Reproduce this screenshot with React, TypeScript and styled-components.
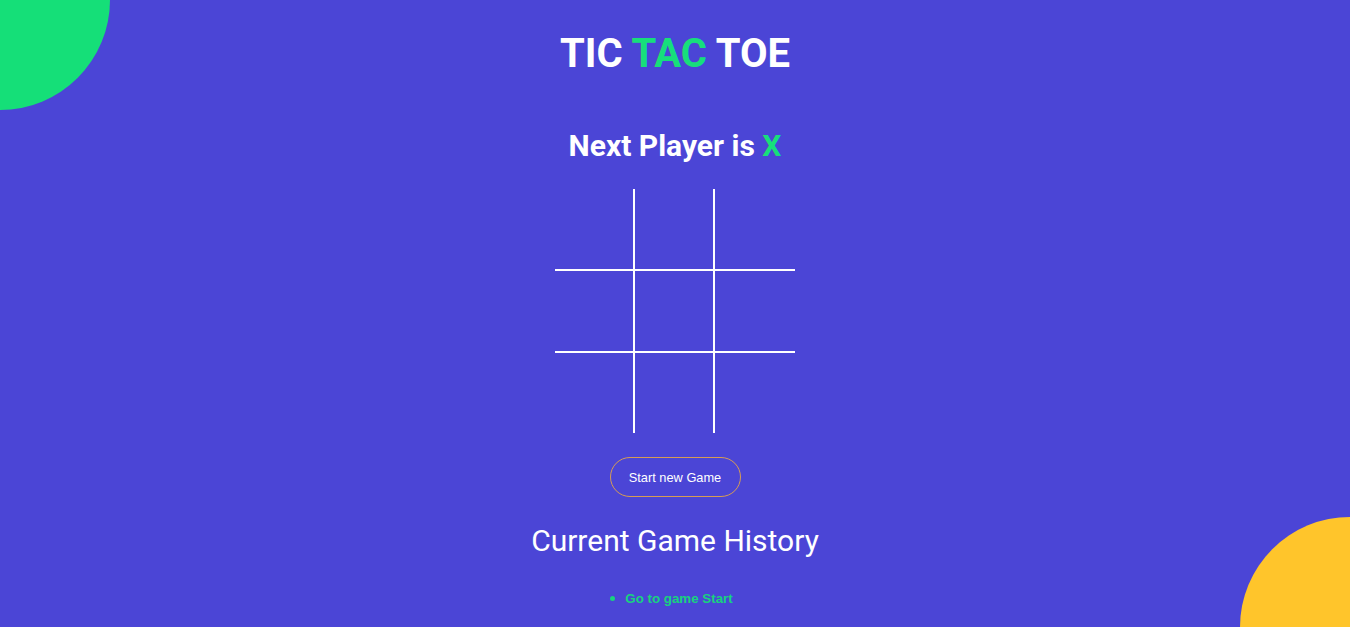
import React, { useState } from "react";
import styled, { createGlobalStyle } from "styled-components";

const GlobalStyle = createGlobalStyle`
  html, body { margin: 0; padding: 0; }
  body { background: #4b45d6; overflow: hidden; }
  * { box-sizing: border-box; }
`;

const Page = styled.div`
  position: relative;
  min-height: 627px;
  height: 627px;
  overflow: hidden;
  background: #4b45d6;
  display: flex;
  flex-direction: column;
  align-items: center;
  padding-top: 30px;
  font-family: Roboto, "Liberation Sans", sans-serif;
  color: #ffffff;
`;

const Blob = styled.div<{ $color: string; $corner: "tl" | "br" }>`
  position: absolute;
  width: 220px;
  height: 220px;
  border-radius: 50%;
  background: ${(p) => p.$color};
  ${(p) =>
    p.$corner === "tl"
      ? "left: -110px; top: -110px;"
      : "right: -110px; bottom: -110px;"}
`;

const Title = styled.h1`
  margin: 0;
  font-size: 40px;
  line-height: 47px;
  font-weight: 700;
  letter-spacing: 0;
`;

const Accent = styled.span`
  color: #17df7b;
`;

const Status = styled.h2`
  margin: 51px 0 0;
  font-size: 30px;
  line-height: 35px;
  font-weight: 700;
`;

const Board = styled.div`
  margin-top: 26px;
  display: grid;
  grid-template-columns: repeat(3, 80px);
  grid-template-rows: 82px 82px 80px;
`;

const Cell = styled.button<{ $right: boolean; $bottom: boolean }>`
  background: transparent;
  border: none;
  padding: 0;
  margin: 0;
  border-right: ${(p) => (p.$right ? "2px solid #ffffff" : "none")};
  border-bottom: ${(p) => (p.$bottom ? "2px solid #ffffff" : "none")};
  color: #ffffff;
  font-family: Roboto, sans-serif;
  font-size: 48px;
  font-weight: 700;
  cursor: pointer;
`;

const NewGameButton = styled.button`
  margin-top: 24px;
  width: 131px;
  height: 40px;
  padding: 0;
  border: 1px solid #d69c55;
  border-radius: 20px;
  background: transparent;
  color: #ffffff;
  font-family: "Liberation Sans", Arial, sans-serif;
  font-size: 12.8px;
  cursor: pointer;
`;

const HistoryTitle = styled.h2`
  margin: 26px 0 0;
  font-size: 30px;
  line-height: 35px;
  font-weight: 400;
`;

const HistoryList = styled.ul`
  margin: 33px 0 0;
  padding: 0 8px 0 0;
  list-style: none;
`;

const HistoryItem = styled.li`
  display: flex;
  align-items: center;
  gap: 10px;
`;

const Dot = styled.span`
  width: 5px;
  height: 5px;
  border-radius: 50%;
  background: #18d27f;
  margin-left: 1px;
`;

const HistoryButton = styled.button`
  background: transparent;
  border: none;
  padding: 0;
  color: #18d27f;
  font-family: "Liberation Sans", Arial, sans-serif;
  font-size: 13.33px;
  font-weight: 700;
  line-height: 15px;
  cursor: pointer;
`;

export default function App() {
  const [squares, setSquares] = useState<(string | null)[]>(Array(9).fill(null));
  const [xNext, setXNext] = useState(true);

  const play = (i: number) => {
    if (squares[i]) return;
    const next = squares.slice();
    next[i] = xNext ? "X" : "O";
    setSquares(next);
    setXNext(!xNext);
  };

  const reset = () => {
    setSquares(Array(9).fill(null));
    setXNext(true);
  };

  return (
    <>
      <GlobalStyle />
      <Page>
        <Blob $color="#15df78" $corner="tl" />
        <Blob $color="#ffc52b" $corner="br" />
        <Title>
          TIC <Accent>TAC</Accent> TOE
        </Title>
        <Status>
          Next Player is <Accent>{xNext ? "X" : "O"}</Accent>
        </Status>
        <Board>
          {squares.map((v, i) => (
            <Cell
              key={i}
              $right={i % 3 !== 2}
              $bottom={i < 6}
              onClick={() => play(i)}
            >
              {v}
            </Cell>
          ))}
        </Board>
        <NewGameButton onClick={reset}>Start new Game</NewGameButton>
        <HistoryTitle>Current Game History</HistoryTitle>
        <HistoryList>
          <HistoryItem>
            <Dot />
            <HistoryButton onClick={reset}>Go to game Start</HistoryButton>
          </HistoryItem>
        </HistoryList>
      </Page>
    </>
  );
}
